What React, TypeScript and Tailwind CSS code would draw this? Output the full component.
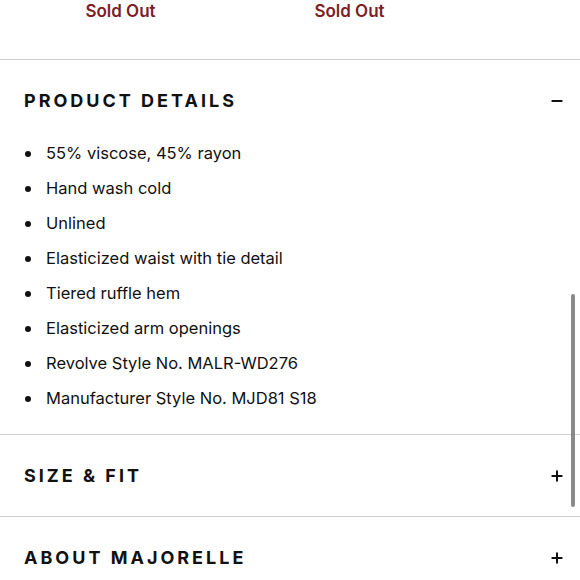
import { Minus, Plus } from "lucide-react"

const details = [
    "55% viscose, 45% rayon",
    "Hand wash cold",
    "Unlined",
    "Elasticized waist with tie detail",
    "Tiered ruffle hem",
    "Elasticized arm openings",
    "Revolve Style No. MALR-WD276",
    "Manufacturer Style No. MJD81 S18",
]

const font = { fontFamily: 'Inter, "Noto Sans", sans-serif' }

const SectionHeader = ({ title, open }: { title: string; open?: boolean }) => (
    <div className="flex items-center justify-between pl-6 pr-[15px] h-[81px]">
        <h2 className="text-[18px] font-bold tracking-[3px] text-[#111] leading-none">{title}</h2>
        {open ? <Minus className="size-4 text-[#111]" strokeWidth={3} /> : <Plus className="size-4 text-[#111]" strokeWidth={3} />}
    </div>
)

export default function App() {
    return (
        <div className="relative w-[580px] h-[580px] overflow-hidden bg-white" style={font}>
            <div className="flex h-[59px] pl-[6px]">
                <div className="w-[229px] text-center text-[17px] font-semibold text-[#7b1f25] leading-5 mt-[1px]">Sold Out</div>
                <div className="w-[229px] text-center text-[17px] font-semibold text-[#7b1f25] leading-5 mt-[1px]">Sold Out</div>
            </div>

            <div className="border-t border-[#cfcfcf]">
                <SectionHeader title="PRODUCT DETAILS" open />
                <ul className="flex flex-col pl-6 -mt-[5px] pb-[18px]">
                    {details.map(item => (
                        <li key={item} className="flex items-center h-[35px] text-[16.5px] text-[#111]">
                            <span className="size-[6px] rounded-full bg-[#111] ml-[1px] mr-[15px]" />
                            {item}
                        </li>
                    ))}
                </ul>
            </div>

            <div className="border-t border-[#cfcfcf]">
                <SectionHeader title="SIZE & FIT" />
            </div>
            <div className="border-t border-[#cfcfcf]">
                <SectionHeader title="ABOUT MAJORELLE" />
            </div>

            <div className="absolute right-[5px] top-[294px] w-[4px] h-[213px] rounded-full bg-[#8a8a8a]" />
        </div>
    )
}
